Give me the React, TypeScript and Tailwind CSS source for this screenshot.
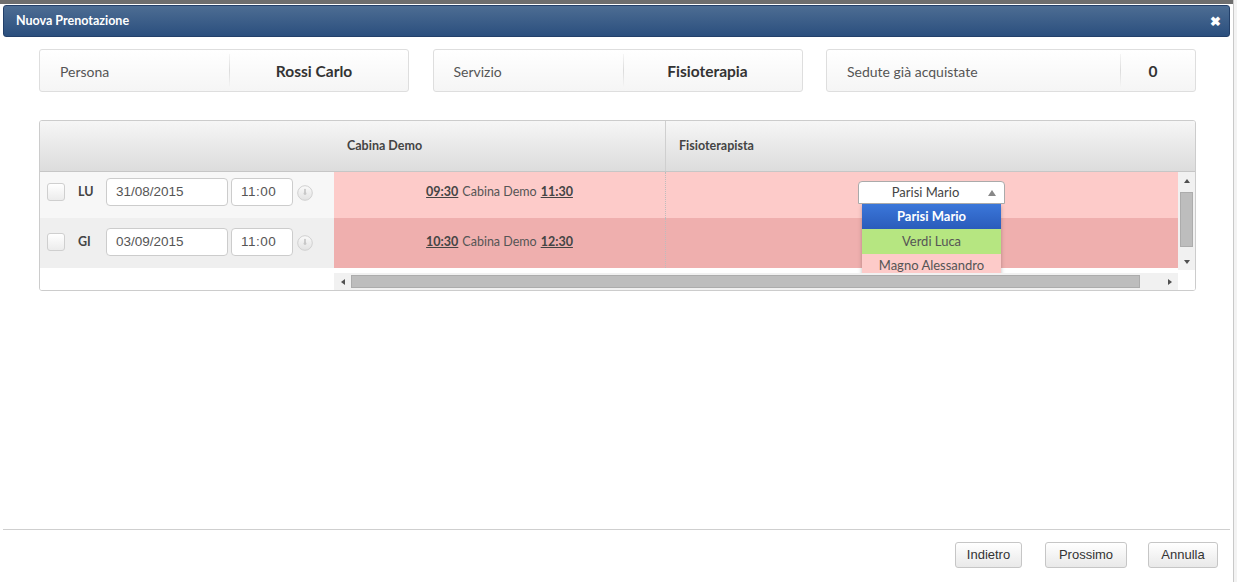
import React from "react";

type Row = {
  day: string;
  date: string;
  time: string;
  from: string;
  to: string;
  leftBg: string;
  pinkBg: string;
  h: string;
  pb: string;
};

const rows: Row[] = [
  { day: "LU", date: "31/08/2015", time: "11:00", from: "09:30", to: "11:30", leftBg: "bg-[#f7f7f7]", pinkBg: "bg-[#fdcbc9]", h: "h-[46px]", pb: "pb-[6px]" },
  { day: "GI", date: "03/09/2015", time: "11:00", from: "10:30", to: "12:30", leftBg: "bg-[#efefef]", pinkBg: "bg-[#efafae]", h: "h-[50px]", pb: "pb-[2px]" },
];

function InfoCard({ label, value, labelW }: { label: string; value: string; labelW: string }) {
  return (
    <div className="w-[370px] h-[43px] flex items-center rounded-[3px] border border-[#dedede] bg-gradient-to-b from-white to-[#f5f5f5]">
      <div className={`${labelW} h-full flex items-center pt-[2px] pl-[20px] text-[14px] text-[#555]`}>{label}</div>
      <div className="w-px h-[33px] bg-gradient-to-b from-[#f5f5f5] via-[#dcdcdc] to-[#f5f5f5]" />
      <div className="flex-1 h-full flex items-center justify-center pt-[2px] pr-[10px] text-[15.5px] font-bold text-[#333]">{value}</div>
    </div>
  );
}

function ClockIcon() {
  return (
    <svg width="16" height="16" viewBox="0 0 16 16">
      <defs>
        <linearGradient id="clk" x1="0" y1="0" x2="0" y2="1">
          <stop offset="0" stopColor="#fafafa" />
          <stop offset="1" stopColor="#e2e2e2" />
        </linearGradient>
      </defs>
      <circle cx="8" cy="8" r="7.3" fill="url(#clk)" stroke="#d0d0d0" />
      <path d="M8 4.5 L8 8.5" stroke="#c4c4c4" strokeWidth="1.6" strokeLinecap="round" />
      <circle cx="8" cy="8.6" r="1.4" fill="#c8c8c8" />
    </svg>
  );
}

function Tri({ dir }: { dir: "up" | "down" | "left" | "right" }) {
  const d = {
    up: "M1 6 L4 2 L7 6 Z",
    down: "M1 2 L4 6 L7 2 Z",
    left: "M6 1 L2 4 L6 7 Z",
    right: "M2 1 L6 4 L2 7 Z",
  }[dir];
  return (
    <svg width="8" height="8" viewBox="0 0 8 8">
      <path d={d} fill="#505050" />
    </svg>
  );
}

export default function App() {
  return (
    <div className="w-[1237px] h-[582px] flex bg-white overflow-hidden font-['Lato',sans-serif]">
      <div className="w-[1234px] h-full flex flex-col border-r border-[#c9c9c9]">
        <div className="h-[4px] bg-[#6e6e6e]" />
        {/* title bar */}
        <div className="mx-[3px] mt-px h-[32px] rounded-[3px] border border-[#23406a] bg-gradient-to-b from-[#4d6d93] to-[#2b4f7e] flex items-center justify-between pl-[12px] pr-[8px]">
          <span className="text-white text-[12.5px] font-bold">Nuova Prenotazione</span>
          <span className="text-white text-[13px] font-bold leading-none">✖</span>
        </div>

        <div className="px-[39px] pt-[12px]">
          <div className="w-[1157px] flex justify-between">
            <InfoCard label="Persona" value="Rossi Carlo" labelW="w-[189px]" />
            <InfoCard label="Servizio" value="Fisioterapia" labelW="w-[189px]" />
            <InfoCard label="Sedute già acquistate" value="0" labelW="w-[293px]" />
          </div>

          {/* table */}
          <div className="mt-[28px] w-[1157px] rounded-[3px] border border-[#cccccc] overflow-hidden">
            <div className="h-[51px] flex bg-gradient-to-b from-[#f6f6f6] to-[#dcdcdc] border-b border-[#c6c6c6] text-[12.5px] font-bold text-[#444]">
              <div className="w-[294px]" />
              <div className="w-[331px] flex items-center pl-[13px]">Cabina Demo</div>
              <div className="flex-1 flex items-center pl-[13px] border-l border-[#cfcfcf]">Fisioterapista</div>
            </div>
            <div className="flex">
              {/* fixed left column */}
              <div className="w-[294px] h-[118px] flex flex-col bg-white">
                {rows.map((r) => (
                  <div key={r.day} className={`${r.h} ${r.pb} ${r.leftBg} flex items-center pl-[7px]`}>
                    <div className="w-[18px] h-[18px] rounded-[3px] border border-[#cfcfcf] bg-gradient-to-b from-white to-[#ececec]" />
                    <span className="ml-[13px] w-[28px] text-[12.5px] font-bold text-[#444]">{r.day}</span>
                    <div className="w-[122px] h-[28px] rounded-[4px] border border-[#cccccc] bg-white flex items-center pl-[9px] text-[13.5px] text-[#555] font-['Liberation_Sans',sans-serif]">
                      {r.date}
                    </div>
                    <div className="ml-[3px] w-[62px] h-[28px] rounded-[4px] border border-[#cccccc] bg-white flex items-center pl-[9px] text-[13.5px] tracking-[0.5px] text-[#555] font-['Liberation_Sans',sans-serif]">
                      {r.time}
                    </div>
                    <div className="ml-[4px] mt-[2px]">
                      <ClockIcon />
                    </div>
                  </div>
                ))}
              </div>

              {/* scrolling part */}
              <div className="flex-1 flex flex-col">
                <div className="flex h-[101px]">
                  <div className="relative flex-1 overflow-hidden bg-white">
                    {rows.map((r) => (
                      <div key={r.day} className={`${r.h} ${r.pinkBg} flex`}>
                        <div className={`w-[331px] ${r.pb} flex items-center justify-center text-[12.5px] text-[#555] gap-[4px]`}>
                          <span className="font-bold underline text-[#444]">{r.from}</span>
                          <span>Cabina Demo</span>
                          <span className="font-bold underline text-[#444]">{r.to}</span>
                        </div>
                        <div className="flex-1 border-l border-dotted border-[#bdbdbd]" />
                      </div>
                    ))}
                    {/* open select */}
                    <div className="absolute left-[524px] top-[9px] w-[147px]">
                      <div className="h-[23px] rounded-t-[4px] border border-[#aaaaaa] bg-white flex items-center justify-center text-[13px] text-[#444] relative">
                        <span className="-ml-[12px]">Parisi Mario</span>
                        <svg className="absolute right-[8px] top-[8px]" width="8" height="6" viewBox="0 0 8 6">
                          <path d="M0 6 L4 0 L8 6 Z" fill="#888" />
                        </svg>
                      </div>
                      <div className="mx-[4px] shadow-[0_2px_4px_rgba(0,0,0,0.25)] text-[13px]">
                        <div className="h-[25px] flex items-center justify-center bg-gradient-to-b from-[#3b77da] to-[#2a5cbb] text-white font-bold">
                          Parisi Mario
                        </div>
                        <div className="h-[25px] flex items-center justify-center bg-[#b6e681] text-[#555]">Verdi Luca</div>
                        <div className="h-[25px] flex items-start pt-[3px] justify-center bg-[#fdcbc9] text-[#555] leading-[16px]">Magno Alessandro</div>
                      </div>
                    </div>
                  </div>
                  {/* vertical scrollbar */}
                  <div className="w-[17px] h-[98px] bg-[#f1f1f1] flex flex-col items-center">
                    <div className="h-[17px] flex items-center justify-center">
                      <Tri dir="up" />
                    </div>
                    <div className="w-[13px] h-[55px] mt-[3px] bg-[#bdbdbd] border border-[#acacac]" />
                    <div className="flex-1" />
                    <div className="h-[17px] flex items-center justify-center">
                      <Tri dir="down" />
                    </div>
                  </div>
                </div>
                {/* horizontal scrollbar */}
                <div className="h-[17px] flex bg-white">
                  <div className="flex-1 bg-[#f1f1f1] flex items-center">
                    <div className="w-[17px] flex justify-center">
                      <Tri dir="left" />
                    </div>
                    <div className="w-[789px] h-[13px] bg-[#bdbdbd] border border-[#acacac]" />
                    <div className="flex-1" />
                    <div className="w-[17px] flex justify-center">
                      <Tri dir="right" />
                    </div>
                  </div>
                  <div className="w-[17px] bg-white" />
                </div>
              </div>
            </div>
          </div>
        </div>

        <div className="flex-1" />
        {/* footer */}
        <div className="mx-[3px] border-t border-[#cfcfcf] h-[53px] flex items-start pt-[12px] justify-end pr-[12px] font-['Liberation_Sans',sans-serif]">
          <button className="w-[67px] h-[26px] rounded-[3px] border border-[#c6c6c6] bg-gradient-to-b from-white to-[#e9e9e9] text-[13px] text-[#333]">
            Indietro
          </button>
          <button className="ml-[23px] w-[82px] h-[26px] rounded-[3px] border border-[#c6c6c6] bg-gradient-to-b from-white to-[#e9e9e9] text-[13px] text-[#333]">
            Prossimo
          </button>
          <button className="ml-[21px] w-[70px] h-[26px] rounded-[3px] border border-[#c6c6c6] bg-gradient-to-b from-white to-[#e9e9e9] text-[13px] text-[#333]">
            Annulla
          </button>
        </div>
      </div>
      <div className="flex-1 bg-[#f3f3f3]" />
    </div>
  );
}
